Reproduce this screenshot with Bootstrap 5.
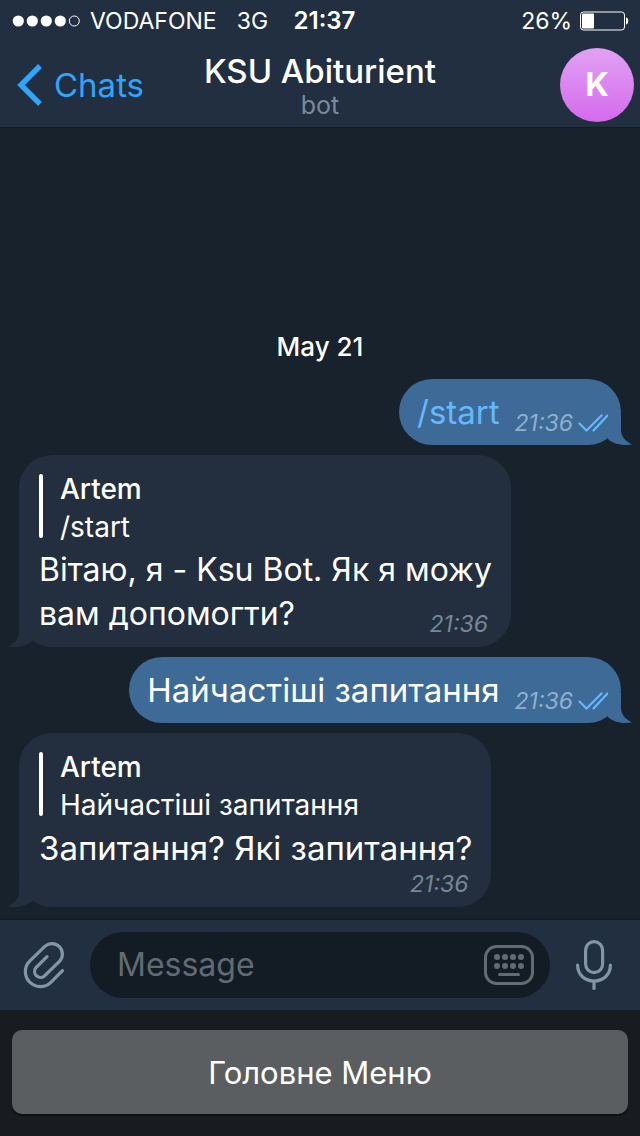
<!DOCTYPE html>
<html lang="uk">
<head>
<meta charset="utf-8">
<meta name="viewport" content="width=device-width, initial-scale=1">
<title>KSU Abiturient</title>
<link href="https://cdn.jsdelivr.net/npm/bootstrap@5.3.0/dist/css/bootstrap.min.css" rel="stylesheet">
<style>
  body { font-family: Inter, "Liberation Sans", sans-serif; background: #18222c; color: #fff; }
  svg { display: block; flex: none; }
  .top-area { background: #212f40; border-bottom: 1px solid #131b24; }
  .bar-grid { display: grid; grid-template-columns: 1fr auto 1fr; align-items: center; }
  .status-row { height: 42px; padding: 0 11px 0 12px; font-size: 23px; line-height: 40px; }
  .status-row .clock { font-size: 24px; }
  .nav-row { height: 85px; padding: 0 6px; }
  .back-link { color: #2ea5ff; font-size: 33px; line-height: 40px; gap: 12px; padding-left: 11px; }
  .chat-title { font-size: 33px; line-height: 40px; font-weight: 500; }
  .chat-sub { font-size: 25px; line-height: 28px; color: #7b8b9a; }
  .avatar { width: 74px; height: 74px; font-size: 33px; background: linear-gradient(#e0a2f3, #d669ed); }
  .messages { gap: 10px; padding: 12px 19px; }
  .date-label { font-size: 26px; line-height: 30px; font-weight: 500; margin-bottom: 7px; }
  .bubble { position: relative; border-radius: 33px; font-size: 33px; line-height: 44px; }
  .bubble-out { background: #3d6a97; padding: 11px 12px 11px 18px; gap: 15px; }
  .bubble-in { background: #232f3f; padding: 19px 19px 10px 20px; }
  .tail { position: absolute; bottom: 0; }
  .bubble-out .tail { right: -11px; }
  .bubble-in .tail { left: -11px; transform: scaleX(-1); }
  .cmd { color: #62b9fd; }
  .sent-at { font-size: 23px; line-height: 26px; font-style: italic; color: #778796; }
  .bubble-out .sent-at { color: #8fb0cc; gap: 5px; margin-bottom: -2px; }
  .bubble-in .sent-at { margin-right: 4px; }
  .quote { font-size: 28px; line-height: 38px; height: 64px; gap: 17px; margin-bottom: 10px; }
  .quote::before { content: ""; width: 4px; height: 64px; border-radius: 2px; background: #fff; }
  .quote > div { padding-top: 3px; }
  .quote strong { font-weight: 500; }
  .bubble-in .body-text { padding-bottom: 1px; }
  .tucked { display: grid; font-size: 32px; }
  .tucked > * { grid-area: 1 / 1; }
  .composer { background: #212f40; border-top: 1px solid #131b24; padding: 12px 28px 12px 23px; }
  .icon-btn { color: #8296a5; }
  .field { background: #131c24; border-radius: 33px; min-width: 0; height: 66px; padding: 0 16px 0 27px; margin: 0 26px 0 25px; color: #606b73; }
  .field input { font-size: 32px; line-height: 40px; min-width: 0; color: #fff; outline: 0; }
  .field input::placeholder { color: #606b73; opacity: 1; }
  .keyboard { background: #181b1f; padding: 20px 12px 22px; }
  .menu-btn, .menu-btn:hover { background: #5b5e61; color: #fff; border: 0; border-radius: 10px; height: 84px; padding: 8px 0 6px; font-size: 31px; box-shadow: 0 2px 0 #0e1012; }
</style>
</head>
<body class="d-flex flex-column min-vh-100">
<header class="top-area">
  <div class="status-row bar-grid">
    <div class="d-flex align-items-center">
      <svg width="70" height="12" viewBox="0 0 70 12" fill="#fff" aria-hidden="true"><circle cx="6.300" cy="6" r="5.600"/><circle cx="20.300" cy="6" r="5.600"/><circle cx="34.300" cy="6" r="5.600"/><circle cx="48.300" cy="6" r="5.600"/><circle cx="62.300" cy="6" r="5" fill="none" stroke="#fff"/></svg>
      <span class="ms-2">VODAFONE</span><span class="ms-3 ps-1">3G</span>
    </div>
    <span class="clock fw-semibold ms-2">21:37</span>
    <div class="d-flex align-items-center justify-content-end gap-2">
      <span>26%</span>
      <svg width="49" height="20" viewBox="0 0 49 20" aria-hidden="true"><rect x=".5" y="1" width="44" height="18" rx="3" fill="none" stroke="#fff"/><rect x="2" y="2.500" width="12" height="15" rx="1" fill="#fff"/><path d="M46 6.500c3 0 3 7 0 7z" fill="#fff"/></svg>
    </div>
  </div>
  <nav class="nav-row bar-grid">
    <a href="#" class="back-link d-flex align-items-center text-decoration-none">
      <svg width="25" height="42" viewBox="0 0 25 42" fill="none" stroke="currentColor" stroke-width="5.400" aria-hidden="true"><path d="M23 2 4 21l19 19"/></svg>
      Chats
    </a>
    <div class="text-center">
      <h1 class="chat-title m-0">KSU Abiturient</h1>
      <div class="chat-sub">bot</div>
    </div>
    <div class="avatar rounded-circle d-flex align-items-center justify-content-center ms-auto fw-bold">K</div>
  </nav>
</header>

<main class="messages flex-grow-1 d-flex flex-column justify-content-end">
  <div class="date-label text-center">May 21</div>

  <article class="bubble bubble-out d-flex align-items-end align-self-end">
    <span class="cmd">/start</span>
    <span class="sent-at d-flex align-items-center"><time>21:36</time>
      <svg width="31" height="18" viewBox="0 0 31 18" fill="none" stroke="#62b9fd" stroke-width="2.200" stroke-linecap="round" aria-hidden="true"><path d="m1.500 9.500 7 7L23.500 1.500M15.500 16.500l14-15"/></svg>
    </span>
    <svg class="tail" width="24" height="30" viewBox="0 0 24 30" fill="#3d6a97" aria-hidden="true"><path d="M13 0v15c0 6 4 11 11 14.500C14 31 5 29 0 24V0z"/></svg>
  </article>

  <article class="bubble bubble-in align-self-start">
    <div class="quote d-flex align-items-center"><div><strong>Artem</strong><div>/start</div></div></div>
    <div class="tucked">
      <span class="body-text">Вітаю, я - Ksu Bot. Як я можу<br>вам допомогти?</span>
      <time class="sent-at align-self-end ms-auto">21:36</time>
    </div>
    <svg class="tail" width="24" height="30" viewBox="0 0 24 30" fill="#232f3f" aria-hidden="true"><path d="M13 0v15c0 6 4 11 11 14.500C14 31 5 29 0 24V0z"/></svg>
  </article>

  <article class="bubble bubble-out d-flex align-items-end align-self-end">
    <span>Найчастіші запитання</span>
    <span class="sent-at d-flex align-items-center"><time>21:36</time>
      <svg width="31" height="18" viewBox="0 0 31 18" fill="none" stroke="#62b9fd" stroke-width="2.200" stroke-linecap="round" aria-hidden="true"><path d="m1.500 9.500 7 7L23.500 1.500M15.500 16.500l14-15"/></svg>
    </span>
    <svg class="tail" width="24" height="30" viewBox="0 0 24 30" fill="#3d6a97" aria-hidden="true"><path d="M13 0v15c0 6 4 11 11 14.500C14 31 5 29 0 24V0z"/></svg>
  </article>

  <article class="bubble bubble-in align-self-start d-flex flex-column">
    <div class="quote d-flex align-items-center"><div><strong>Artem</strong><div>Найчастіші запитання</div></div></div>
    <span class="body-text">Запитання? Які запитання?</span>
    <time class="sent-at align-self-end">21:36</time>
    <svg class="tail" width="24" height="30" viewBox="0 0 24 30" fill="#232f3f" aria-hidden="true"><path d="M13 0v15c0 6 4 11 11 14.500C14 31 5 29 0 24V0z"/></svg>
  </article>
</main>

<form class="composer d-flex align-items-center">
  <button type="button" class="icon-btn btn p-0 border-0" aria-label="Attach">
    <svg width="42" height="48" viewBox="0 0 42 48" fill="none" stroke="currentColor" stroke-width="3.200" stroke-linecap="round"><path d="M39.500 29.700 27.600 41.600A15 15 0 0 1 6.400 20.400L22.100 5.100A10.500 10.500 0 0 1 36.900 19.900L21.200 35.200A6 6 0 0 1 12.800 26.800L24 15.600"/></svg>
  </button>
  <div class="field d-flex align-items-center flex-grow-1">
    <input type="text" class="flex-grow-1 bg-transparent border-0 p-0" placeholder="Message" aria-label="Message">
    <button type="button" class="btn p-0 border-0 text-reset" aria-label="Keyboard">
      <svg width="50" height="40" viewBox="0 0 50 40" fill="currentColor"><rect x="1.500" y="1.500" width="47" height="37" rx="11" fill="none" stroke="currentColor" stroke-width="3"/><circle cx="13" cy="12" r="3"/><circle cx="21" cy="12" r="3"/><circle cx="29" cy="12" r="3"/><circle cx="37" cy="12" r="3"/><circle cx="13" cy="21" r="3"/><circle cx="21" cy="21" r="3"/><circle cx="29" cy="21" r="3"/><circle cx="37" cy="21" r="3"/><rect x="14" y="28" width="22" height="3" rx="1.500"/></svg>
    </button>
  </div>
  <button type="button" class="icon-btn btn p-0 border-0" aria-label="Record voice">
    <svg width="36" height="50" viewBox="0 0 36 50" fill="none" stroke="currentColor" stroke-width="3.200" stroke-linecap="round"><rect x="9.600" y="1.600" width="17" height="31" rx="8.500"/><path d="M1.600 25c0 10 7.400 16 16.400 16s16.400-6 16.400-16M18 41v7.500"/></svg>
  </button>
</form>

<footer class="keyboard">
  <button type="button" class="menu-btn btn w-100">Головне Меню</button>
</footer>
<script src="https://cdn.jsdelivr.net/npm/bootstrap@5.3.0/dist/js/bootstrap.bundle.min.js"></script>
</body>
</html>
